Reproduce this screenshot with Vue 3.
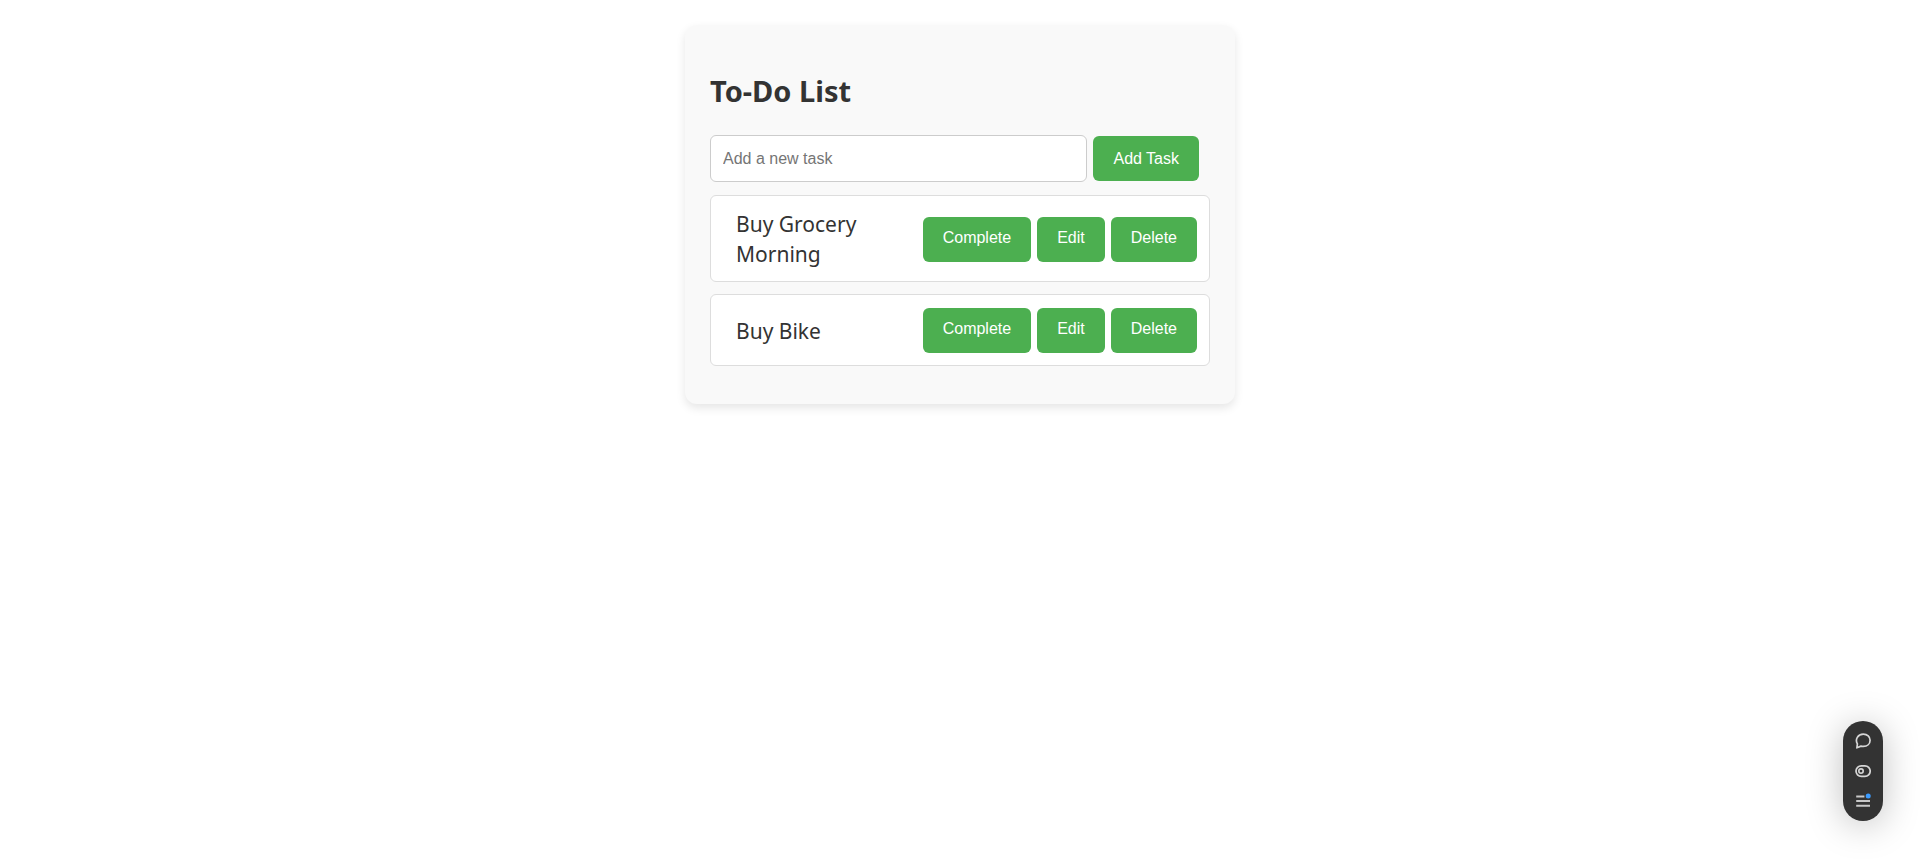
<script setup>
import { ref } from 'vue'

const draft = ref('')
const tasks = ref([
  { id: 1, title: 'Buy Grocery Morning', done: false },
  { id: 2, title: 'Buy Bike', done: false },
])
let nextId = 3

function addTask() {
  const title = draft.value.trim()
  if (!title) return
  tasks.value.push({ id: nextId++, title, done: false })
  draft.value = ''
}

function editTask(task) {
  draft.value = task.title
  removeTask(task)
}

function removeTask(task) {
  tasks.value = tasks.value.filter((t) => t.id !== task.id)
}
</script>

<template>
  <main class="card">
    <h1 class="title">To-Do List</h1>
    <form class="new-task" @submit.prevent="addTask">
      <input v-model="draft" class="field" type="text" placeholder="Add a new task" aria-label="Add a new task" />
      <button class="btn" type="submit">Add Task</button>
    </form>
    <ul class="list">
      <li v-for="task in tasks" :key="task.id" class="item">
        <span class="name" :class="{ done: task.done }">{{ task.title }}</span>
        <div class="actions">
          <button class="btn" type="button" @click="task.done = !task.done">Complete</button>
          <button class="btn" type="button" @click="editTask(task)">Edit</button>
          <button class="btn" type="button" @click="removeTask(task)">Delete</button>
        </div>
      </li>
    </ul>
  </main>

  <aside class="toolbar">
    <button class="tool" type="button" aria-label="Comment">
      <svg width="16" height="16" viewBox="0 0 16 16" fill="none" stroke="#d6d6d6" stroke-width="1.7" stroke-linejoin="round">
        <path d="M1.9 14.8 L2.4 10.9 C-0.2 6.4 2.8 1.2 8.3 1.2 C12.3 1.2 15.1 3.8 15.1 7.2 C15.1 10.8 12.2 13.3 8.4 13.3 C7.6 13.3 6.8 13.3 6 13.1 Z" />
      </svg>
    </button>
    <button class="tool" type="button" aria-label="Toggle view">
      <svg width="16" height="16" viewBox="0 0 16 16" fill="none" stroke="#d6d6d6">
        <rect x="1" y="2.8" width="14.2" height="10.6" rx="5.3" stroke-width="1.7" />
        <circle cx="6" cy="8.1" r="2.2" stroke-width="1.6" />
      </svg>
    </button>
    <button class="tool" type="button" aria-label="Menu">
      <svg width="16" height="16" viewBox="0 0 16 16">
        <path d="M1.2 3.4 H9.4 M1.2 8 H15 M1.2 12.8 H15" stroke="#c8c8c8" stroke-width="2" />
        <circle cx="13.2" cy="3.1" r="2.5" fill="#3b9bff" />
      </svg>
    </button>
  </aside>
</template>

<style>
body {
  margin: 0;
  background: #fff;
}
</style>

<style scoped>
.card {
  box-sizing: border-box;
  max-width: 550px;
  margin: 25px auto;
  padding: 46px 25px 38px;
  border-radius: 12px;
  background: #f9f9f9;
  box-shadow: 0 4px 10px rgba(0, 0, 0, 0.1);
  color: #333;
  font-family: "Segoe UI", "Noto Sans", sans-serif;
}

.title {
  margin: 0 0 24px;
  font-size: 29px;
  line-height: 40px;
  font-weight: 700;
}

.new-task {
  display: flex;
  align-items: center;
  gap: 6px;
  margin-right: 11px;
}

.field {
  box-sizing: border-box;
  flex: 1;
  min-width: 0;
  height: 47px;
  padding: 0 12px;
  border: 1px solid #ccc;
  border-radius: 6px;
  background: #fff;
  color: #333;
  font: 16px "Liberation Sans", Arial, sans-serif;
}

.field::placeholder {
  color: #757575;
}

.btn {
  flex: none;
  padding: 14px 20px 13px;
  border: 0;
  border-radius: 6px;
  background: #4caf50;
  color: #fff;
  font: 16px/18px "Liberation Sans", Arial, sans-serif;
  cursor: pointer;
}

.list {
  display: flex;
  flex-direction: column;
  gap: 12px;
  margin: 13px 0 0;
  padding: 0;
  list-style: none;
}

.item {
  display: flex;
  align-items: center;
  justify-content: space-between;
  padding: 13px 12px 12px;
  border: 1px solid #ddd;
  border-radius: 6px;
  background: #fff;
}

.name {
  max-width: 150px;
  padding-left: 13px;
  font-size: 21px;
  line-height: 30px;
}

.done {
  text-decoration: line-through;
}

.actions {
  display: flex;
  gap: 6px;
}

.actions .btn {
  padding: 12px 20px 15px;
}

.toolbar {
  position: fixed;
  right: 37px;
  bottom: 47px;
  display: flex;
  flex-direction: column;
  align-items: center;
  gap: 14px;
  padding: 12px;
  border-radius: 20px;
  background: #333;
  box-shadow: 0 4px 36px rgba(0, 0, 0, 0.25);
}

.tool {
  display: flex;
  padding: 0;
  border: 0;
  background: none;
  cursor: pointer;
}
</style>
